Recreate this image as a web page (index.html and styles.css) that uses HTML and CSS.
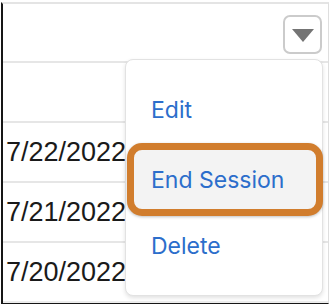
FILE: index.html
```html
<!DOCTYPE html>
<html lang="en">
<head>
    <meta charset="UTF-8">
    <meta name="viewport" content="width=device-width, initial-scale=1.0">
    <title>Sessions</title>
    <link rel="stylesheet" href="styles.css">
</head>
<body>

<div class="sessions-table">
    <div class="table-header">
        <button class="menu-toggle" aria-label="Show actions">
            <svg width="22" height="14" viewBox="0 0 22 14">
                <path d="M0 0 H22 L11 13 Z" fill="#747474"/>
            </svg>
        </button>
    </div>
    <div class="table-row"></div>
    <div class="table-row"><span class="row-date">7/22/2022</span></div>
    <div class="table-row"><span class="row-date">7/21/2022</span></div>
    <div class="table-row last"><span class="row-date">7/20/2022</span></div>

    <!-- Actions menu, open -->
    <ul class="action-menu">
        <li class="action-item"><a href="#">Edit</a></li>
        <li class="action-item highlighted"><a href="#">End Session</a></li>
        <li class="action-item"><a href="#">Delete</a></li>
    </ul>
</div>

</body>
</html>
```

FILE: styles.css
```css
body {
    margin: 0;
    padding: 0;
    background-color: #fff;
    font-family: Inter, "Liberation Sans", Arial, sans-serif;
    color: #181818;
}

.sessions-table {
    position: relative;
    margin: 2px 3px 0 1px;
    border-top: 2px solid #e4e4e4;
    border-left: 2px solid #161616;
    border-right: 1px solid #dedede;
    border-bottom: 1px solid #161616;
}

.table-header {
    height: 59px;
    display: flex;
    justify-content: flex-end;
    align-items: center;
    padding: 3px 6px 0 0;
    box-sizing: border-box;
    border-bottom: 2px solid #e6e6e6;
}

.menu-toggle {
    width: 39px;
    height: 39px;
    padding: 3px 0 0;
    display: flex;
    align-items: center;
    justify-content: center;
    background: #fff;
    border: 2px solid #cbcbcb;
    border-radius: 7px;
    cursor: pointer;
}

.table-row {
    height: 58px;
    display: flex;
    align-items: center;
    padding-left: 3px;
    border-bottom: 2px solid #e6e6e6;
    overflow: hidden;
}

.table-row.last {
    border-bottom: 2px solid #ececec;
}

.row-date {
    font-family: "Liberation Sans", Arial, sans-serif;
    font-size: 27px;
    white-space: nowrap;
    color: #1a1a1a;
}

.action-menu {
    position: absolute;
    top: 55px;
    left: 122px;
    width: 198px;
    height: 237px;
    box-sizing: border-box;
    margin: 0;
    padding: 16px 0;
    list-style: none;
    background: #fff;
    border: 1px solid #e2e2e2;
    border-radius: 8px;
    box-shadow: 0 2px 4px rgba(0, 0, 0, 0.12);
}

.action-item {
    height: 68px;
    display: flex;
    align-items: center;
    padding-left: 25px;
    box-sizing: border-box;
}

.action-item a {
    font-size: 23px;
    color: #2c6ecb;
    text-decoration: none;
}

.action-item.highlighted {
    height: 73px;
    margin: -1px -1px -4px 1px;
    padding-left: 17px;
    background: #f3f3f3;
    border: 7px solid #d17d2d;
    border-radius: 15px;
    box-shadow: 0 1px 3px rgba(0, 0, 0, 0.25);
}
```
